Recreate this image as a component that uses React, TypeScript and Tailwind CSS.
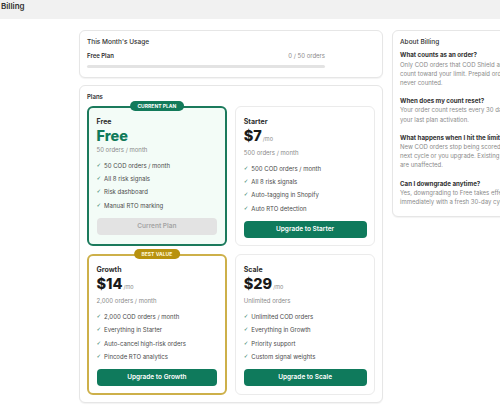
import { ReactNode } from "react";

type Plan = {
  name: string;
  price: string;
  perMonth: boolean;
  orders: string;
  features: string[];
  button: string;
  current?: boolean;
  badge?: "current" | "best";
};

const plans: Plan[] = [
  {
    name: "Free",
    price: "Free",
    perMonth: false,
    orders: "50 orders / month",
    features: ["50 COD orders / month", "All 8 risk signals", "Risk dashboard", "Manual RTO marking"],
    button: "Current Plan",
    current: true,
    badge: "current",
  },
  {
    name: "Starter",
    price: "$7",
    perMonth: true,
    orders: "500 orders / month",
    features: ["500 COD orders / month", "All 8 risk signals", "Auto-tagging in Shopify", "Auto RTO detection"],
    button: "Upgrade to Starter",
  },
  {
    name: "Growth",
    price: "$14",
    perMonth: true,
    orders: "2,000 orders / month",
    features: ["2,000 COD orders / month", "Everything in Starter", "Auto-cancel high-risk orders", "Pincode RTO analytics"],
    button: "Upgrade to Growth",
    badge: "best",
  },
  {
    name: "Scale",
    price: "$29",
    perMonth: true,
    orders: "Unlimited orders",
    features: ["Unlimited COD orders", "Everything in Growth", "Priority support", "Custom signal weights"],
    button: "Upgrade to Scale",
  },
];

const faqs = [
  {
    q: "What counts as an order?",
    a: "Only COD orders that COD Shield analyzes count toward your limit. Prepaid orders are never counted.",
  },
  {
    q: "When does my count reset?",
    a: "Your order count resets every 30 days from your last plan activation.",
  },
  {
    q: "What happens when I hit the limit?",
    a: "New COD orders stop being scored until the next cycle or you upgrade. Existing analyses are unaffected.",
  },
  {
    q: "Can I downgrade anytime?",
    a: "Yes, downgrading to Free takes effect immediately with a fresh 30-day cycle.",
  },
];

function Card({ children, className = "" }: { children: ReactNode; className?: string }) {
  return (
    <div className={`bg-white border border-[#e6e6e6] rounded-[6px] shadow-[0_1px_1px_rgba(0,0,0,0.05)] ${className}`}>
      {children}
    </div>
  );
}

function PlanCard({ plan }: { plan: Plan }) {
  const border =
    plan.badge === "current"
      ? "border-2 border-[#1b7a5c] bg-[#f3fcf7] pt-[9px]"
      : plan.badge === "best"
        ? "border-2 border-[#cdb04a] bg-white pt-[9px]"
        : "border border-[#ebebeb] bg-white pt-[10px]";

  return (
    <div className={`relative rounded-[6px] px-[7.5px] pb-[7px] ${border}`}>
      {plan.badge === "current" && (
        <span className="absolute left-1/2 -translate-x-1/2 -top-[7px] h-[10px] px-[7.5px] rounded-full bg-[#127a5a] text-white text-[5px] font-bold leading-[10px] whitespace-nowrap">
          CURRENT PLAN
        </span>
      )}
      {plan.badge === "best" && (
        <span className="absolute left-1/2 -translate-x-1/2 -top-[7px] h-[10px] px-[7.5px] rounded-full bg-[#b8920f] text-[#fff8dc] text-[5px] font-bold leading-[10px] whitespace-nowrap">
          BEST VALUE
        </span>
      )}
      <div className="text-[7px] font-bold leading-[10px] text-[#303030]">{plan.name}</div>
      <div className="flex items-baseline leading-[18px]">
        <span className={`text-[14.5px] font-extrabold ${plan.current ? "text-[#0f7a5a]" : "text-[#1a1a1a]"}`}>
          {plan.price}
        </span>
        {plan.perMonth && <span className="ml-[1px] text-[5.5px] text-[#8a8a8a]">/mo</span>}
      </div>
      <div className="text-[6px] leading-[9px] text-[#8a8a8a]">{plan.orders}</div>
      <ul className="mt-[7px] flex flex-col gap-[4.3px]">
        {plan.features.map((f) => (
          <li key={f} className="flex items-center gap-[3px] text-[6px] leading-[9px] text-[#4a4a4a]">
            <span className="font-['DejaVu_Sans'] text-[5.5px] text-[#1b7a5c]">✓</span>
            {f}
          </li>
        ))}
      </ul>
      <button
        className={`mt-[8px] w-full h-[17px] rounded-[4px] text-[6.5px] font-semibold ${
          plan.current ? "bg-[#e3e3e3] text-[#a3a3a3]" : "bg-[#0f7a5c] text-white"
        }`}
      >
        {plan.button}
      </button>
    </div>
  );
}

export default function App() {
  return (
    <div className="w-[500px] h-[414px] overflow-hidden bg-white font-['Inter',sans-serif] text-[#303030]">
      {/* Header */}
      <header className="h-[19px] bg-[#f1f1f1] pl-[1px] pt-[1px] text-[8px] font-semibold leading-[10px] text-[#303030]">
        Billing
      </header>

      <div className="flex items-start gap-[9px] pl-[79px] pt-[11px]">
        <div className="w-[304px] shrink-0 flex flex-col gap-[7px]">
          {/* Usage */}
          <Card className="px-[7px] pt-[7px] pb-[9px]">
            <div className="text-[6.5px] font-medium leading-[9px]">This Month's Usage</div>
            <div className="w-[238px] mt-[4.3px]">
              <div className="flex justify-between text-[6px] leading-[9px]">
                <span className="font-semibold">Free Plan</span>
                <span className="text-[#8a8a8a]">0 / 50 orders</span>
              </div>
              <div className="mt-[4.5px] h-[3px] rounded-full bg-[#e3e3e3]" />
            </div>
          </Card>

          {/* Plans */}
          <Card className="px-[7px] pt-[6.5px] pb-[7px]">
            <div className="text-[6px] font-semibold leading-[9px]">Plans</div>
            <div className="mt-[4.5px] grid grid-cols-2 gap-x-[8.5px] gap-y-[8px]">
              {plans.map((p) => (
                <PlanCard key={p.name} plan={p} />
              ))}
            </div>
          </Card>
        </div>

        {/* About */}
        <Card className="w-[150px] shrink-0 px-[7px] pt-[7px] pb-[10px]">
          <div className="text-[6.5px] font-medium leading-[9px]">About Billing</div>
          <div className="mt-[3.3px] flex flex-col gap-[9px]">
            {faqs.map((f) => (
              <div key={f.q}>
                <div className="text-[6.2px] font-bold leading-[9.2px] text-[#303030] whitespace-nowrap">{f.q}</div>
                <p className="text-[6px] leading-[9.2px] text-[#8a8a8a]">{f.a}</p>
              </div>
            ))}
          </div>
        </Card>
      </div>
    </div>
  );
}
